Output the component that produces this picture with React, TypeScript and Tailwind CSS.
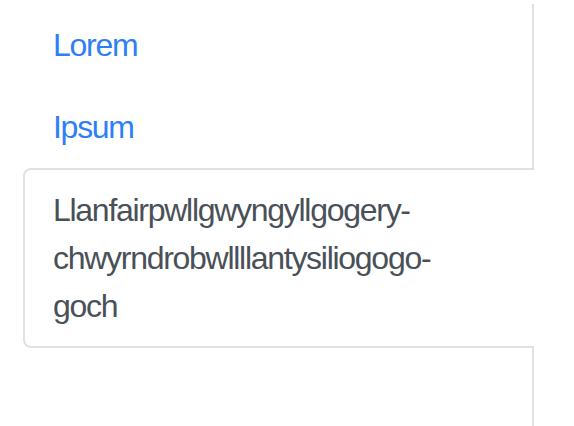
const links = ['Lorem', 'Ipsum'];

export default function App() {
  return (
    <div className="min-h-[426px] bg-white pt-[4px] pl-[23px] font-['Liberation_Sans',Arial,sans-serif] text-[32px] leading-[48px] tracking-[-0.04em]">
      <ul className="flex min-h-[422px] w-[511px] flex-col border-r-2 border-[#dee2e6]">
        {links.map((label) => (
          <li key={label}>
            <a href="#" className="block border-2 border-transparent py-[15px] pl-[28px] text-[#2e7ff6]">
              {label}
            </a>
          </li>
        ))}
        <li className="-mr-[2px]">
          <a
            href="#"
            className="block rounded-l-[8px] border-2 border-r-0 border-[#dee2e6] bg-white py-[16px] pl-[28px] text-[#495057]"
          >
            Llanfairpwllgwyngyllgogery-
            <br />
            chwyrndrobwllllantysiliogogo-
            <br />
            goch
          </a>
        </li>
      </ul>
    </div>
  );
}
